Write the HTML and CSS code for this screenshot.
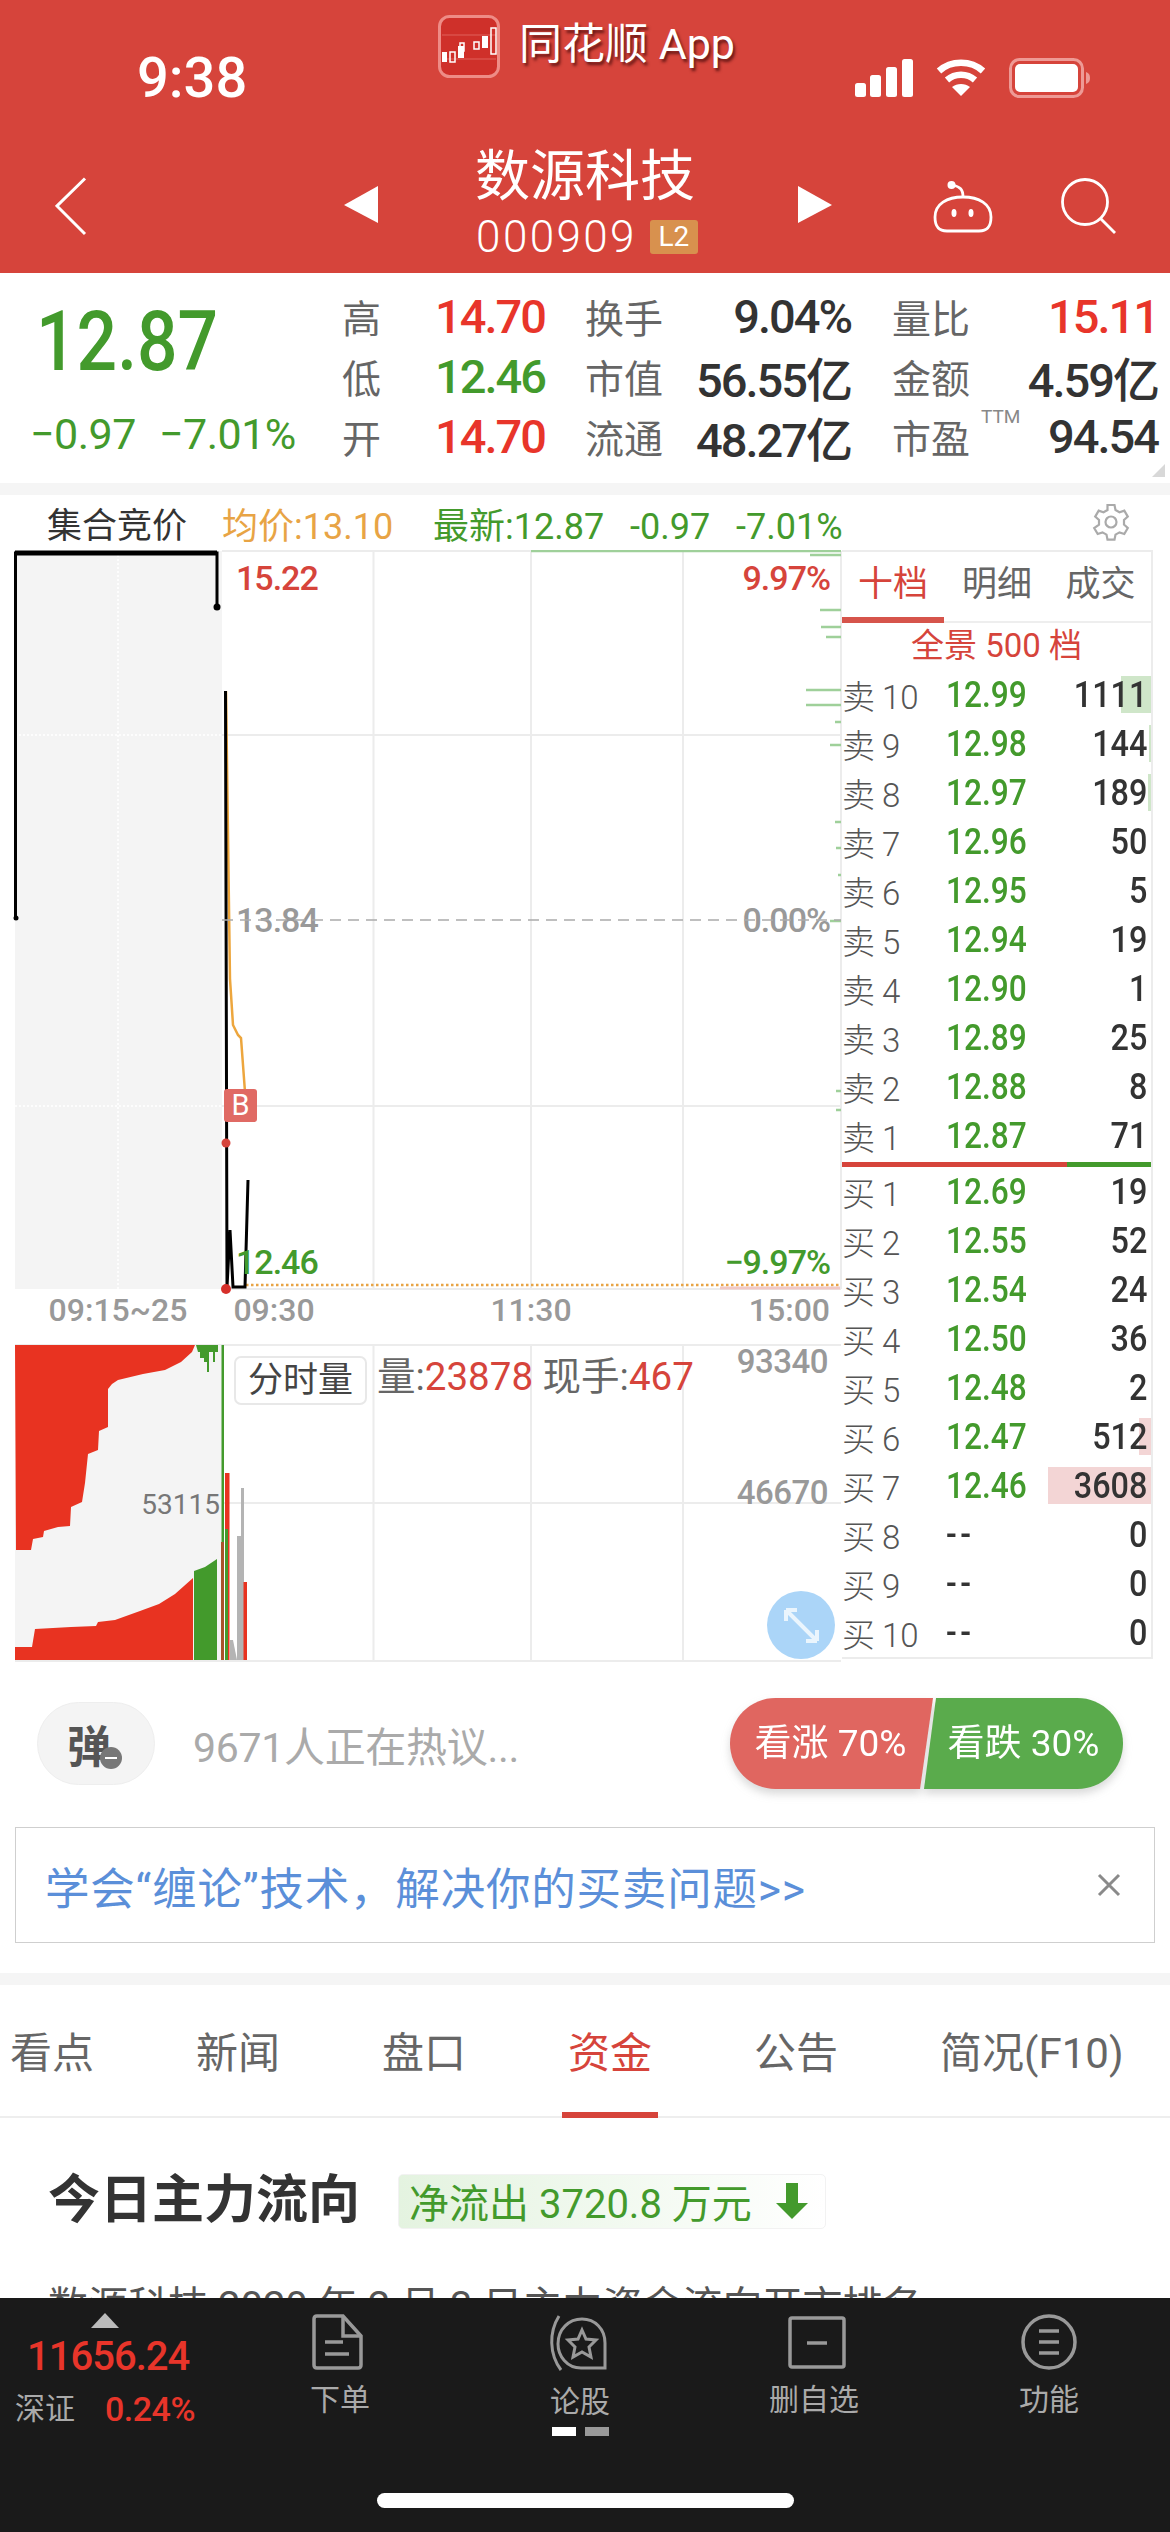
FILE: index.html
```html
<!DOCTYPE html>
<html lang="zh-CN">
<head>
<meta charset="utf-8">
<title>数源科技</title>
<link rel="stylesheet" href="styles.css">
</head>
<body>
<div class="screen">
  <header class="top">
    <div class="status">
      <span class="time">9:38</span>
      <div class="banner-app">
        <svg class="app-logo" width="62" height="63" viewBox="0 0 62 63">
          <rect x="1.500" y="1.500" width="59" height="60" rx="10" fill="#cf302a" stroke="#ee8c86" stroke-width="3"/>
          <path d="M4 44h54M4 20h54" stroke="#e0605a" stroke-width="1"/>
          <g fill="#fff"><rect x="4" y="37" width="5" height="10"/><rect x="20" y="31" width="6" height="12"/><rect x="44" y="21" width="6" height="12"/></g>
          <g fill="none" stroke="#fff" stroke-width="1.500"><rect x="12" y="37" width="5" height="10"/><rect x="22" y="28" width="4" height="8"/><rect x="36" y="27" width="5" height="7"/><rect x="53" y="13" width="5" height="26"/></g>
        </svg>
        <span class="app-name">同花顺 App</span>
      </div>
      <div class="status-icons">
        <svg width="58" height="38" viewBox="0 0 58 38" fill="#fff">
          <rect x="0" y="24" width="11" height="14" rx="2.500"/><rect x="15" y="16" width="11" height="22" rx="2.500"/><rect x="31" y="8" width="11" height="30" rx="2.500"/><rect x="47" y="0" width="11" height="38" rx="2.500"/>
        </svg>
        <svg class="wifi" width="50" height="38" viewBox="0 0 50 38" fill="none" stroke="#fff" stroke-width="6.500">
          <path d="M3 12C15 1 35 1 47 12"/><path d="M11 21c8-7 20-7 28 0"/><path d="M25 37l-9-9c5-4 13-4 18 0z" fill="#fff" stroke="none"/>
        </svg>
        <svg class="battery" width="82" height="40" viewBox="0 0 82 40">
          <rect x="1.500" y="1.500" width="72" height="37" rx="9" fill="none" stroke="#ee9a95" stroke-width="3"/>
          <rect x="6" y="6" width="63" height="28" rx="5" fill="#fff"/>
          <path d="M77 14c3 1 4 3 4 6s-1 5-4 6z" fill="#ee9a95"/>
        </svg>
      </div>
    </div>
    <nav class="nav">
      <svg class="back" width="32" height="59" viewBox="0 0 32 59" fill="none" stroke="#fff" stroke-width="3"><path d="M30 1.500L2 29l28 28"/></svg>
      <svg class="prev" width="34" height="37" viewBox="0 0 34 37" fill="#fff"><path d="M34 0v37L0 19z"/></svg>
      <div class="stock">
        <div class="stock-name">数源科技</div>
        <div class="stock-code"><span>000909</span><b class="l2">L2</b></div>
      </div>
      <svg class="next" width="34" height="37" viewBox="0 0 34 37" fill="#fff"><path d="M0 0v37l34-18z"/></svg>
      <svg class="robot" width="60" height="53" viewBox="0 0 60 53" fill="none" stroke="#fff" stroke-width="2.800">
        <path d="M2 37C2 24 14 17 30 17s28 7 28 20c0 10-4 14-12 14H14C6 51 2 47 2 37z"/>
        <path d="M30 17c0-8-3-10-10-12"/><circle cx="18.500" cy="5" r="4" fill="#fff" stroke="none"/>
        <ellipse cx="21" cy="33" rx="2.500" ry="4" fill="#fff" stroke="none"/><ellipse cx="38" cy="33" rx="2.500" ry="4" fill="#fff" stroke="none"/>
      </svg>
      <svg class="search" width="56" height="56" viewBox="0 0 56 56" fill="none" stroke="#fff" stroke-width="2.800">
        <circle cx="24" cy="24" r="22.500"/><path d="M40 41l14 14"/>
      </svg>
    </nav>
  </header>

  <section class="quote">
    <div class="price-box">
      <div class="price">12.87</div>
      <div class="change"><span>−0.97</span><span>−7.01%</span></div>
    </div>
    <div class="stats">
      <div class="stat c1"><span class="k">高</span><span class="v red">14.70</span></div>
      <div class="stat c2"><span class="k">换手</span><span class="v">9.04%</span></div>
      <div class="stat c3"><span class="k">量比</span><span class="v red">15.11</span></div>
      <div class="stat c1"><span class="k">低</span><span class="v green">12.46</span></div>
      <div class="stat c2"><span class="k">市值</span><span class="v">56.55亿</span></div>
      <div class="stat c3"><span class="k">金额</span><span class="v">4.59亿</span></div>
      <div class="stat c1"><span class="k">开</span><span class="v red">14.70</span></div>
      <div class="stat c2"><span class="k">流通</span><span class="v">48.27亿</span></div>
      <div class="stat c3"><span class="k">市盈<sup class="ttm">TTM</sup></span><span class="v">94.54</span></div>
    </div>
    <i class="corner"></i>
  </section>
  <div class="band"></div>

  <section class="chart-head">
    <span class="ch-title">集合竞价</span>
    <span class="ch-avg">均价:13.10</span>
    <span class="ch-last">最新:12.87&nbsp; -0.97&nbsp; -7.01%</span>
    <svg class="gear" width="38" height="38" viewBox="0 0 38 38" fill="none" stroke="#aaa" stroke-width="2.200">
      <path d="M15.500 2h7l1 5 4 2.200 4.800-1.600 3.500 6-3.800 3.400v4.600l3.800 3.400-3.500 6-4.800-1.600-4 2.200-1 5h-7l-1-5-4-2.200-4.800 1.600-3.500-6L7 21.600V17l-3.800-3.400 3.500-6 4.800 1.600 4-2.200z"/>
      <circle cx="19" cy="19" r="5.500"/>
    </svg>
  </section>

  <section class="market">
    <svg class="chart" width="842" height="1120" viewBox="0 550 842 1120">
      <rect x="15" y="551" width="207" height="738" fill="#f4f4f4"/>
      <g stroke="#ececec" stroke-width="2" fill="none">
        <path d="M222 551H841M222 735H841M222 1106H841M222 1289H841"/>
        <path d="M373.500 551V1289M531 551V1289M683 551V1289M841 551V1289"/>
        <path d="M15 1345H841M222 1503H841M15 1661H841M373.500 1345V1661M531 1345V1661M683 1345V1661"/>
      </g>
      <path d="M15 735H222M15 1106H222M118 551V1289" stroke="#fff" stroke-width="1.500" stroke-dasharray="2 2"/>
      <path d="M246 1285H841" stroke="#e8a445" stroke-width="2.500" stroke-dasharray="2.500 2.500"/>
      <path d="M720 1288H840" stroke="#f0c8c4" stroke-width="3"/>
      <!-- 盘口挂单刻度 -->
      <g stroke="#9fd09a" stroke-width="2.500">
        <path d="M531 551H841M810 555H841M820 610H841M821 627H841M826 637H841M806 690H841M806 705H841M835 722H841M830 745H841M835 822H841M836 848H841M838 875H841M830 921H841M836 1091H841M836 1110H841"/>
      </g>
      <!-- 集合竞价走势 -->
      <path d="M15.500 918V553H217V607" fill="none" stroke="#000" stroke-width="3"/>
      <path d="M15 553H217" stroke="#000" stroke-width="5"/>
      <circle cx="217" cy="607" r="3.500"/><circle cx="16" cy="918" r="2.500"/>
      <!-- 分时走势 -->
      <path d="M226 691L230 979L233 1025L238 1035L241 1038L245 1092" fill="none" stroke="#eda63d" stroke-width="2.500"/>
      <path d="M225.500 691L227 1287L230 1230L233 1287H245L248 1180" fill="none" stroke="#000" stroke-width="3"/>
      <rect x="224" y="1089" width="33" height="33" rx="3" fill="#e06a64"/>
      <text class="t-b" x="240.500" y="1115" text-anchor="middle">B</text>
      <circle cx="226" cy="1143" r="4.500" fill="#d6443b"/>
      <circle cx="226" cy="1289" r="5" fill="#d6302b"/>
      <text class="t-price red-f" x="236" y="590">15.22</text>
      <text class="t-price gray-f" x="236" y="932">13.84</text>
      <text class="t-price green-f" x="236" y="1274">12.46</text>
      <text class="t-price red-f" x="830" y="590" text-anchor="end">9.97%</text>
      <text class="t-price gray-f" x="830" y="932" text-anchor="end">0.00%</text>
      <text class="t-price green-f" x="830" y="1274" text-anchor="end">−9.97%</text>
      <path d="M222 920H841" stroke="#aaa" stroke-width="1.500" stroke-dasharray="11 7"/>
      <text class="t-time" x="118" y="1321" text-anchor="middle">09:15~25</text>
      <text class="t-time" x="274" y="1321" text-anchor="middle">09:30</text>
      <text class="t-time" x="531" y="1321" text-anchor="middle">11:30</text>
      <text class="t-time" x="830" y="1321" text-anchor="end">15:00</text>
      <!-- 竞价量 -->
      <rect x="15" y="1345" width="207" height="315" fill="#f4f4f4"/>
      <path d="M15 1345H195L192 1352L181 1362L165 1370L143 1374L118 1380L112 1384L108 1389V1427L99 1431L98 1450L88 1454L85 1483L82 1502L71 1507L70 1526L58 1527L44 1531L43 1537L33 1539L31 1550H16z" fill="#e83321"/>
      <path d="M15 1647H32L35 1629L71 1627L96 1626L98 1622L115 1620L140 1611L159 1604L175 1594L193 1578V1660H15z" fill="#e83321"/>
      <path d="M194 1571L205 1567L217 1559V1660H194z" fill="#439a2c"/>
      <path d="M196 1345H218V1352H215V1362H213V1352H209V1372H207V1362H204V1358H200V1352H198z" fill="#439a2c"/>
      <rect x="221.500" y="1345" width="2.500" height="315" fill="#439a2c"/>
      <rect x="225" y="1473" width="4.500" height="187" fill="#e83321"/>
      <rect x="221" y="1542" width="3" height="118" fill="#a9532a"/>
      <rect x="225" y="1529" width="3" height="131" fill="#439a2c"/>
      <rect x="241" y="1488" width="3" height="172" fill="#b4b4b4"/>
      <rect x="237" y="1536" width="4" height="124" fill="#b4b4b4"/>
      <path d="M230 1660V1640H233L237 1660z" fill="#b4b4b4"/>
      <rect x="243.500" y="1582" width="3.500" height="78" fill="#e83321"/>
      <text class="t-small" x="220" y="1514" text-anchor="end">53115</text>
      <rect x="235" y="1357" width="131" height="47" rx="6" fill="#fff" stroke="#e8e8e8" stroke-width="2"/>
      <text class="t-vol" x="300.500" y="1392" text-anchor="middle">分时量</text>
      <text class="t-vol2" x="377" y="1390">量:<tspan class="red-f">23878</tspan> 现手:<tspan class="red-f">467</tspan></text>
      <text class="t-axis gray-f" x="828" y="1373" text-anchor="end">93340</text>
      <text class="t-axis gray-f" x="828" y="1504" text-anchor="end">46670</text>
      <circle cx="801" cy="1625" r="34" fill="#abd5f8"/>
      <path d="M786 1610L817 1641M786 1610v11M786 1610h11M817 1641v-11M817 1641h-11" fill="none" stroke="#eaf5fd" stroke-width="4"/>
    </svg>

    <div class="book">
      <div class="book-tabs"><span class="active">十档</span><span>明细</span><span>成交</span></div>
      <div class="book-500">全景 500 档</div>
      <div class="book-rows">
        <div class="row"><i class="depth ask" style="width:30px"></i><span class="lbl">卖 10</span><span class="p">12.99</span><span class="q">1111</span></div>
        <div class="row"><i class="depth ask" style="width:2px"></i><span class="lbl">卖 9</span><span class="p">12.98</span><span class="q">144</span></div>
        <div class="row"><i class="depth ask" style="width:3px"></i><span class="lbl">卖 8</span><span class="p">12.97</span><span class="q">189</span></div>
        <div class="row"><span class="lbl">卖 7</span><span class="p">12.96</span><span class="q">50</span></div>
        <div class="row"><span class="lbl">卖 6</span><span class="p">12.95</span><span class="q">5</span></div>
        <div class="row"><span class="lbl">卖 5</span><span class="p">12.94</span><span class="q">19</span></div>
        <div class="row"><span class="lbl">卖 4</span><span class="p">12.90</span><span class="q">1</span></div>
        <div class="row"><span class="lbl">卖 3</span><span class="p">12.89</span><span class="q">25</span></div>
        <div class="row"><span class="lbl">卖 2</span><span class="p">12.88</span><span class="q">8</span></div>
        <div class="row"><span class="lbl">卖 1</span><span class="p">12.87</span><span class="q">71</span></div>
      </div>
      <div class="split"><i class="split-red"></i><i class="split-green"></i></div>
      <div class="book-rows">
        <div class="row"><span class="lbl">买 1</span><span class="p">12.69</span><span class="q">19</span></div>
        <div class="row"><span class="lbl">买 2</span><span class="p">12.55</span><span class="q">52</span></div>
        <div class="row"><span class="lbl">买 3</span><span class="p">12.54</span><span class="q">24</span></div>
        <div class="row"><span class="lbl">买 4</span><span class="p">12.50</span><span class="q">36</span></div>
        <div class="row"><span class="lbl">买 5</span><span class="p">12.48</span><span class="q">2</span></div>
        <div class="row"><i class="depth bid" style="width:12px"></i><span class="lbl">买 6</span><span class="p">12.47</span><span class="q">512</span></div>
        <div class="row"><i class="depth bid" style="width:103px"></i><span class="lbl">买 7</span><span class="p">12.46</span><span class="q">3608</span></div>
        <div class="row"><span class="lbl">买 8</span><span class="p none">--</span><span class="q">0</span></div>
        <div class="row"><span class="lbl">买 9</span><span class="p none">--</span><span class="q">0</span></div>
        <div class="row"><span class="lbl">买 10</span><span class="p none">--</span><span class="q">0</span></div>
      </div>
    </div>
  </section>

  <section class="vote">
    <div class="danmu"><span>弹</span><i class="minus"></i></div>
    <span class="hot">9671人正在热议...</span>
    <div class="vote-btns">
      <span class="up">看涨 70%</span>
      <span class="down">看跌 30%</span>
    </div>
  </section>

  <section class="ad">
    <span>学会“缠论”技术&#xFF0C;解决你的买卖问题&gt;&gt;</span>
    <svg width="24" height="24" viewBox="0 0 24 24" stroke="#8a8a8a" stroke-width="3"><path d="M2 2l20 20M22 2L2 22"/></svg>
  </section>
  <div class="band"></div>

  <section class="tabs">
    <span>看点</span><span>新闻</span><span>盘口</span><span class="active">资金</span><span>公告</span><span>简况(F10)</span>
  </section>

  <main class="flow">
    <div class="flow-head">
      <h2>今日主力流向</h2>
      <div class="flow-badge">
        <span>净流出 3720.8 万元</span>
        <svg width="32" height="36" viewBox="0 0 32 36" fill="#439a2c"><path d="M10 0h12v20h10L16 36 0 20h10z"/></svg>
      </div>
    </div>
    <p class="flow-text">数源科技 2020 年 2 月 3 日主力资金流向开市排名</p>
  </main>

  <footer class="bottom">
    <div class="index">
      <i class="index-tri"></i>
      <div class="index-val">11656.24</div>
      <div class="index-row"><span>深证</span><b>0.24%</b></div>
    </div>
    <div class="tool">
      <svg class="nudge-l" width="52" height="56" viewBox="0 0 52 56" fill="none" stroke="#999" stroke-width="3.500"><path d="M3 5q0-3 3-3h26l18 20v29q0 3-3 3H6q-3 0-3-3z"/><path d="M32 2v20h18M14 28h18M14 40h24"/></svg>
      <span>下单</span>
    </div>
    <div class="tool">
      <svg class="nudge-l" width="60" height="58" viewBox="0 0 60 58" fill="none" stroke="#999" stroke-width="3"><path d="M12 2C2 18 2 40 14 56"/><path d="M58 54H34C20 54 11 42 11 30 11 15 22 5 35 5c13 0 23 10 23 24z"/><path d="M35 16l4 9 10 1-7 7 2 10-9-5-9 5 2-10-7-7 10-1z"/></svg>
      <span>论股</span>
      <div class="pager"><i class="on"></i><i></i></div>
    </div>
    <div class="tool">
      <svg class="nudge-r" width="58" height="56" viewBox="0 0 58 56" fill="none" stroke="#999" stroke-width="3.500"><rect x="2" y="4" width="54" height="49" rx="2"/><path d="M19 29h20"/></svg>
      <span>删自选</span>
    </div>
    <div class="tool">
      <svg width="56" height="56" viewBox="0 0 56 56" fill="none" stroke="#999" stroke-width="3.500"><circle cx="28" cy="28" r="26"/><path d="M18 17h20M18 28h20M18 39h20"/></svg>
      <span>功能</span>
    </div>
    <i class="home"></i>
  </footer>
</div>
</body>
</html>
```
FILE: styles.css
```css
* { box-sizing: border-box; }
html, body { margin: 0; padding: 0; background: #fff; }
body { font-family: Roboto, "Noto Sans CJK SC", sans-serif; }
i { display: block; font-style: normal; }

.screen { width: 1170px; height: 2532px; display: flex; flex-direction: column; overflow: hidden; position: relative; background: #fff; }

/* header */
.top { height: 273px; flex: none; background: #d6443b; color: #fff; }
.status { height: 130px; position: relative; display: flex; align-items: flex-start; justify-content: space-between; padding: 49px 79px 0 137px; }
.time { font-size: 56px; font-weight: 500; line-height: 58px; }
.banner-app { position: absolute; left: 438px; top: 15px; display: flex; align-items: center; gap: 19px; }
.app-name { font-size: 43px; line-height: 50px; margin-top: -6px; text-shadow: 2px 3px 3px rgba(70, 10, 10, .75); }
.status-icons { display: flex; align-items: center; gap: 23px; padding-top: 9px; }
.nav { height: 143px; position: relative; display: block; }
.nav svg { position: absolute; }
.back { left: 55px; top: 47px; }
.prev { left: 344px; top: 56px; }
.next { left: 798px; top: 56px; }
.robot { left: 933px; top: 50px; }
.search { left: 1061px; top: 48px; }
.stock { display: flex; flex-direction: column; align-items: center; }
.stock-name { font-size: 55px; line-height: 64px; margin-top: 14px; }
.stock-code { display: flex; align-items: center; gap: 13px; margin-top: 9px; padding-left: 4px; font-size: 44px; line-height: 40px; font-weight: 300; letter-spacing: 2.400px; }
.l2 { width: 48px; height: 34px; border-radius: 3px; background: #d8914e; font-size: 28px; font-weight: 400; line-height: 34px; text-align: center; letter-spacing: 0; }

/* quote */
.quote { height: 210px; flex: none; display: flex; position: relative; }
.price-box { width: 342px; padding-left: 30px; }
.price { font-size: 84px; font-weight: 500; line-height: 84px; margin-top: 27px; margin-left: 6px; color: #439a2c; transform: scaleX(.85); transform-origin: left center; }
.change { display: flex; gap: 23px; margin-top: 27px; font-size: 43px; line-height: 46px; color: #439a2c; letter-spacing: -.5px; }
.stats { display: grid; grid-template-columns: 203px 306px 307px; grid-auto-rows: 60px; padding-top: 13px; }
.stat { display: flex; justify-content: space-between; align-items: center; }
.stat.c2 { padding-left: 40px; }
.stat.c3 { padding-left: 41px; }
.k { font-size: 39px; color: #666; position: relative; line-height: 60px; margin-top: 7px; }
.v { font-size: 47px; font-weight: 500; color: #333; letter-spacing: -2px; }
.red { color: #e8352a; }
.green { color: #439a2c; }
.ttm { position: absolute; left: 89px; top: -2px; font-size: 19px; line-height: 18px; color: #888; }
.corner { position: absolute; right: 5px; bottom: 6px; width: 0; height: 0; border-left: 13px solid transparent; border-bottom: 13px solid #d8d8d8; }
.band { height: 12px; flex: none; background: #f5f5f5; }

/* chart head */
.chart-head { height: 55px; flex: none; display: flex; align-items: center; position: relative; padding-left: 47px; font-size: 36px; }
.ch-title { font-size: 35px; color: #333; width: 175px; }
.ch-avg { color: #e8a445; width: 211px; }
.ch-last { color: #439a2c; word-spacing: 4px; }
.gear { position: absolute; left: 1092px; top: 8px; }

/* market */
.market { height: 1120px; flex: none; display: flex; align-items: flex-start; }
.chart { flex: none; display: block; }
.t-price { font-size: 34px; font-weight: 500; letter-spacing: -1px; }
.t-axis { font-size: 33px; font-weight: 500; letter-spacing: -.5px; }
.t-time { font-size: 32px; font-weight: 500; fill: #999; }
.t-b { font-size: 29px; fill: #fff; }
.t-small { font-size: 28px; fill: #777; }
.t-vol { font-size: 35px; fill: #444; }
.t-vol2 { font-size: 38.500px; fill: #666; }
.red-f { fill: #d6443b; }
.gray-f { fill: #999; }
.green-f { fill: #439a2c; }

/* order book */
.book { width: 311px; height: 1109px; border-top: 2px solid #ececec; border-right: 2px solid #ececec; border-bottom: 2px solid #ececec; display: flex; flex-direction: column; }
.book-tabs { height: 71px; flex: none; display: grid; grid-template-columns: 102px 106px 1fr; border-bottom: 2px solid #eee; position: relative; font-size: 35px; color: #666; text-align: center; line-height: 66px; }
.book-tabs .active { color: #d6443b; }
.book-tabs .active::after { content: ""; position: absolute; left: 0; bottom: -2px; width: 102px; height: 6px; background: #d6544b; }
.book-500 { height: 47px; flex: none; text-align: center; font-size: 33px; line-height: 46px; color: #d6443b; }
.book-rows { display: flex; flex-direction: column; flex: none; }
.row { height: 49px; position: relative; display: flex; align-items: center; }
.depth { position: absolute; right: 0; top: 6px; height: 37px; }
.depth.ask { background: #cfe6c9; }
.depth.bid { background: #f3d5d5; }
.lbl { width: 104px; flex: none; font-size: 33px; font-weight: 300; color: #555; position: relative; word-spacing: -1px; }
.p { width: 90px; flex: none; font-size: 36px; font-weight: 500; color: #439a2c; position: relative; transform: scaleX(.88); transform-origin: left center; }
.p.none { color: #333; letter-spacing: 4px; }
.q { flex: 1; text-align: right; padding-right: 4px; font-size: 36px; font-weight: 500; color: #333; position: relative; transform: scaleX(.9); transform-origin: right center; }
.split { height: 5px; flex: none; display: flex; margin-top: 2px; }
.split-red { width: 225px; background: #d6443b; }
.split-green { flex: 1; background: #439a2c; }

/* vote */
.vote { height: 147px; flex: none; display: flex; align-items: center; position: relative; padding: 0 47px 0 37px; }
.danmu { width: 118px; height: 83px; border-radius: 42px; background: #f4f4f4; border: 1px solid #eee; position: relative; display: flex; justify-content: center; align-items: center; font-size: 44px; font-weight: 700; color: #555; padding-right: 14px; }
.minus { position: absolute; left: 62px; top: 44px; width: 22px; height: 22px; border-radius: 50%; background: #777; }
.minus::after { content: ""; position: absolute; left: 5px; top: 10px; width: 12px; height: 2px; background: #fff; }
.hot { margin-left: 38px; font-size: 41px; color: #aaa; letter-spacing: -.3px; }
.vote-btns { margin-left: auto; display: flex; filter: drop-shadow(0 5px 4px rgba(120, 120, 120, .28)); font-size: 37px; color: #fff; line-height: 91px; }
.up, .down { height: 91px; width: 203px; text-align: center; display: block; }
.up { background: #e06660; border-radius: 46px 0 0 46px; clip-path: polygon(0 0, 100% 0, 190px 100%, 0 100%); padding-right: 2px; }
.down { background: #5aab4c; width: 199px; margin-left: -9px; border-radius: 0 46px 46px 0; clip-path: polygon(12px 0, 100% 0, 100% 100%, 0 100%); }

/* ad */
.ad { height: 116px; flex: none; margin: 10px 15px 30px; border: 1.500px solid #cfcfcf; display: flex; align-items: center; justify-content: space-between; padding: 0 33px 0 29px; font-size: 44.500px; letter-spacing: .8px; color: #5b8fd9; }

/* tabs */
.tabs { height: 133px; flex: none; display: flex; gap: 102px; padding: 41px 0 0 10px; border-bottom: 2px solid #eee; font-size: 42px; color: #666; line-height: 56px; position: relative; }
.tabs .active { color: #d6443b; position: relative; }
.tabs .active::after { content: ""; position: absolute; left: -6px; right: -6px; top: 86px; height: 6px; background: #d6443b; }

/* flow */
.flow { flex: 1; min-height: 0; overflow: hidden; padding: 53px 48px 0; }
.flow-head { display: flex; align-items: center; gap: 38px; }
.flow-head h2 { margin: 0; font-size: 52px; font-weight: 700; color: #333; line-height: 60px; }
.flow-badge { width: 428px; height: 55px; border: 1px solid #f2f2f2; border-radius: 5px; background: linear-gradient(90deg, #e4f3e0, #fff); display: flex; align-items: center; justify-content: space-between; padding: 0 17px 0 10px; font-size: 40px; color: #439a2c; white-space: nowrap; }
.flow-text { margin: 48px 0 0; font-size: 40px; color: #555; line-height: 56px; white-space: nowrap; }

/* footer */
.bottom { height: 234px; flex: none; background: #1a1a1a; position: relative; display: grid; grid-template-columns: 220px 240px 240px 228px 242px; align-items: start; }
.index { padding: 15px 0 0 15px; }
.index-tri { width: 0; height: 0; margin-left: 76px; border-left: 14px solid transparent; border-right: 14px solid transparent; border-bottom: 15px solid #bbb; }
.index-val { margin: 6px 0 0 12px; font-size: 40px; font-weight: 500; line-height: 46px; color: #e8352a; letter-spacing: -1px; }
.index-row { display: flex; gap: 30px; align-items: center; margin-top: 6px; font-size: 30px; color: #aaa; line-height: 46px; }
.index-row b { font-weight: 500; font-size: 34px; color: #e8352a; letter-spacing: -.5px; }
.tool { display: flex; flex-direction: column; align-items: center; padding-top: 16px; font-size: 30px; line-height: 40px; color: #aaa; position: relative; }
.tool span { margin-top: 10px; }
.nudge-l { margin-right: 7px; }
.nudge-r { margin-left: 6px; }
.pager { display: flex; gap: 9px; margin-top: 5px; }
.pager i { width: 24px; height: 9px; background: #999; }
.pager i.on { background: #fff; }
.home { position: absolute; left: 377px; top: 195px; width: 417px; height: 15px; border-radius: 8px; background: #fff; }
```
